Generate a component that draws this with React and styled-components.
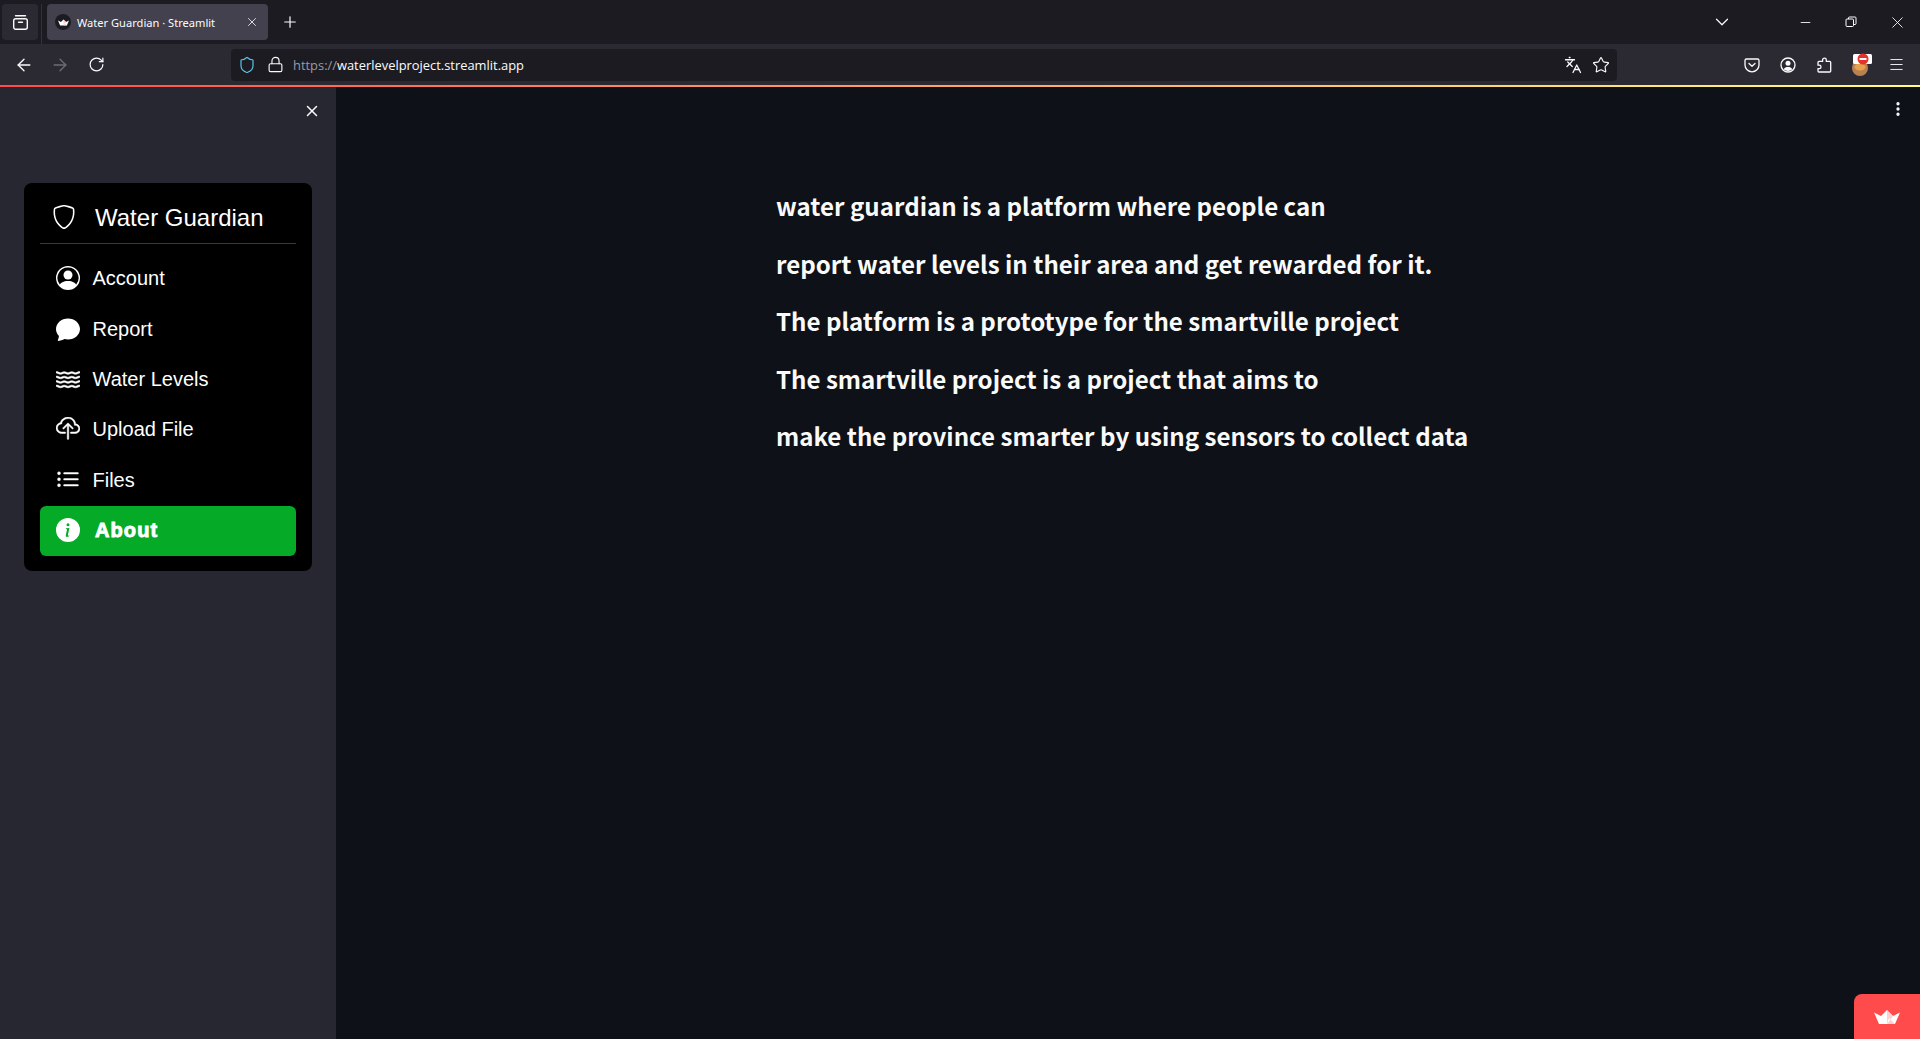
import React from "react";
import styled, { createGlobalStyle } from "styled-components";
import { BsShield, BsPersonCircle, BsChatFill, BsWater, BsCloudUpload, BsListUl, BsInfoCircleFill } from "react-icons/bs";
import { ArrowLeft, ArrowRight, RotateCw, Lock, Shield, Languages, Star, Plus, X, ChevronDown, Minus, Menu as MenuIcon, EllipsisVertical } from "lucide-react";

const Global = createGlobalStyle`
  html, body { margin: 0; padding: 0; height: 100%; background: #0e1117; overflow: hidden; }
  #root { height: 100%; }
`;

const Page = styled.div`
  width: 1920px; height: 1039px; display: flex; flex-direction: column; position: relative; overflow: hidden;
  font-family: "Liberation Sans", Arial, sans-serif;
`;

const TabStrip = styled.div`
  height: 44px; flex: none; background: #1c1b22; display: flex; align-items: flex-start; box-sizing: border-box; padding-top: 4px; color: #fbfbfe;
`;
const TabsButton = styled.div`
  width: 36px; height: 36px; margin-left: 2px; border-radius: 4px; background: #2b2a33; display: flex; align-items: center; justify-content: center;
`;
const StripDivider = styled.div`
  width: 1px; height: 40px; background: #33323a; margin: 0 4px 0 3px;
`;
const Tab = styled.div`
  width: 221px; height: 36px; margin-left: 1px; border-radius: 4px; background: #42414d; display: flex; align-items: center; box-sizing: border-box; padding-left: 8px; padding-right: 9px;
  font-family: "Noto Sans", "Open Sans", sans-serif; font-size: 11.1px; color: #fbfbfe;
`;
const Favicon = styled.div`
  width: 16px; height: 16px; border-radius: 50%; background: #1c1b22; display: flex; align-items: center; justify-content: center; margin-right: 6px; flex: none;
`;
const TabTitle = styled.span`
  flex: 1; white-space: nowrap;
`;
const Slot = styled.div`
  width: ${(p) => p.$w || 36}px; height: ${(p) => p.$h || 36}px; flex: none; display: flex; align-items: center; justify-content: center; color: ${(p) => p.$c || "#fbfbfe"};
`;
const Spacer = styled.div`
  flex: 1;
`;
const Toolbar = styled.div`
  height: 41px; flex: none; background: #2b2a33; display: flex; align-items: center; box-sizing: border-box; padding: 0 6px; color: #fbfbfe;
`;
const UrlBar = styled.div`
  width: 1386px; height: 32px; margin-left: 117px; background: #1c1b22; border-radius: 4px; display: flex; align-items: center; box-sizing: border-box; padding: 0 2px 0 2px;
`;
const UrlText = styled.div`
  font-family: "Open Sans", "Noto Sans", sans-serif; font-size: 12.9px; color: #fbfbfe; margin-left: 4px; white-space: nowrap;
`;
const UrlScheme = styled.span`
  color: #9a99a2;
`;
const Decoration = styled.div`
  height: 2px; flex: none; background: linear-gradient(90deg, rgb(255, 75, 75), rgb(255, 253, 128));
`;
const Body = styled.div`
  flex: 1; min-height: 0; display: flex;
`;
const Sidebar = styled.aside`
  width: 336px; flex: none; background: #262730; box-sizing: border-box; padding: 0 24px; display: flex; flex-direction: column; color: #fafafa;
`;
const SidebarTop = styled.div`
  height: 96px; flex: none; display: flex; justify-content: flex-end; align-items: flex-start; padding-top: 12px; box-sizing: border-box; margin-right: -12px;
`;
const Card = styled.nav`
  background: #000; border-radius: 8px; box-sizing: border-box; height: 388px; padding: 0 16px; display: flex; flex-direction: column;
`;
const MenuTitle = styled.div`
  height: 61px; flex: none; box-sizing: border-box; border-bottom: 1px solid #3a3a3a; display: flex; align-items: center; color: #fff; font-size: 24px; padding-left: 12px; padding-top: 9px;
  svg { margin-right: 19px; margin-top: -1px; }
`;
const MenuList = styled.div`
  display: flex; flex-direction: column; padding-top: 9.6px;
`;
const MenuItem = styled.div`
  height: 50.4px; display: flex; align-items: center; box-sizing: border-box; padding-left: 16px; border-radius: 6px; color: #fff; font-size: 20px;
  background: ${(p) => (p.$active ? "#05ab27" : "transparent")};
  font-weight: ${(p) => (p.$active ? 700 : 400)};
  ${(p) => p.$active && "letter-spacing: 1.1px; -webkit-text-stroke: 0.9px #fff;"}
  svg { flex: none; margin-right: ${(p) => (p.$active ? 15 : 12.5)}px; -webkit-text-stroke: 0; stroke-width: ${(p) => p.$sw || 0}; margin-top: -1px; }
`;
const Main = styled.main`
  flex: 1; min-width: 0; background: #0e1117; display: flex; justify-content: center; padding-top: 90px; box-sizing: border-box;
`;
const Content = styled.div`
  width: 736px; box-sizing: border-box; padding: 0 16px;
`;
const Line = styled.p`
  margin: 0; height: 57.6px; line-height: 58px; white-space: nowrap; font-family: "Noto Sans CJK SC", "Source Sans Pro", sans-serif; font-weight: 700; font-size: 24.1px; color: #fafafa;
`;
const KebabButton = styled.div`
  position: absolute; right: 12px; top: 99px; width: 20px; height: 20px; display: flex; align-items: center; justify-content: center; color: #fafafa;
`;
const Badge = styled.div`
  position: absolute; right: 0; bottom: 0; width: 66px; height: 45px; background: #ff4b4b; border-top-left-radius: 8px; display: flex; align-items: center; justify-content: center;
`;

const Crown = ({ w, h, back = "#fff" }) => (
  <svg width={w} height={h} viewBox="0 0 26 14">
    <path d="M0 2.5 L7 6 L13 0 L19 6 L26 2.5 L21 14 L5 14 Z" fill={back} />
    <path d="M13 0 L19 6 L13 14 Z M13 14 L21 14 L15 8 Z" fill="#f7c6c6" opacity="0.8" />
  </svg>
);

const Tabs = () => (
  <svg width="17" height="17" viewBox="0 0 17 17" fill="none" stroke="#fbfbfe" strokeWidth="1.4">
    <path d="M3.5 1.7h10" strokeLinecap="round" />
    <rect x="1.7" y="4.7" width="13.6" height="10.6" rx="2" />
    <path d="M6.5 8.3h4" strokeLinecap="round" />
  </svg>
);
const Restore = () => (
  <svg width="12" height="12" viewBox="0 0 12 12" fill="none" stroke="#fbfbfe" strokeWidth="1">
    <rect x="1" y="3" width="7.5" height="7.5" rx="1" />
    <path d="M3.5 3V2a1 1 0 0 1 1-1H10a1 1 0 0 1 1 1v5.5a1 1 0 0 1-1 1H8.5" />
  </svg>
);
const Pocket = () => (
  <svg width="16" height="16" viewBox="0 0 16 16" fill="none" stroke="#fbfbfe" strokeWidth="1.3" strokeLinecap="round" strokeLinejoin="round">
    <path d="M2.5 2h11A1.5 1.5 0 0 1 15 3.5V8a7 6.8 0 0 1-14 0V3.5A1.5 1.5 0 0 1 2.5 2Z" />
    <path d="M5 6.5 8 9.3l3-2.8" />
  </svg>
);
const AccountIcon = () => (
  <svg width="16" height="16" viewBox="0 0 16 16" fill="none">
    <circle cx="8" cy="8" r="7" stroke="#fbfbfe" strokeWidth="1.3" />
    <circle cx="8" cy="6.3" r="2.5" fill="#fbfbfe" />
    <path d="M3.6 12.2C4.6 10.4 6 9.9 8 9.9s3.4.5 4.4 2.3A6 6 0 0 1 8 14a6 6 0 0 1-4.4-1.8Z" fill="#fbfbfe" />
  </svg>
);
const Extension = () => (
  <svg width="16" height="16" viewBox="0 0 16 16" fill="none" stroke="#fbfbfe" strokeWidth="1.3" strokeLinejoin="round">
    <path d="M8.5 1.2c1.1 0 1.8.8 1.8 1.8v1.4h3.4c.6 0 1 .4 1 1V14c0 .5-.4 1-1 1H3c-.6 0-1-.5-1-1v-2.400h1.300c1 0 1.700-.8 1.700-1.700S4.300 8.200 3.300 8.200H2V5.400c0-.6.4-1 1-1h3.600V3c0-1 .8-1.800 1.900-1.800Z" />
  </svg>
);
const Avatar = () => (
  <svg width="24" height="24" viewBox="0 0 24 24">
    <circle cx="12" cy="15" r="8" fill="#b98052" />
    <ellipse cx="12" cy="14" rx="5.500" ry="3.500" fill="#e8a24e" />
    <rect x="5" y="1" width="19" height="10" rx="1.500" fill="#fff" />
    <circle cx="15" cy="6" r="5.500" fill="#e5322b" />
    <rect x="11.500" y="5" width="7" height="2" fill="#fff" />
  </svg>
);

const items = [
  { label: "Account", Icon: BsPersonCircle },
  { label: "Report", Icon: BsChatFill },
  { label: "Water Levels", Icon: BsWater, sw: 0.4 },
  { label: "Upload File", Icon: BsCloudUpload, sw: 0.3 },
  { label: "Files", Icon: BsListUl, sw: 0.3 },
  { label: "About", Icon: BsInfoCircleFill, active: true },
];
const lines = [
  "water guardian is a platform where people can",
  "report water levels in their area and get rewarded for it.",
  "The platform is a prototype for the smartville project",
  "The smartville project is a project that aims to",
  "make the province smarter by using sensors to collect data",
];

export default function App() {
  return (
    <Page>
      <Global />
      <TabStrip>
        <TabsButton><Tabs /></TabsButton>
        <StripDivider />
        <Tab>
          <Favicon><Crown w={11} h={7} /></Favicon>
          <TabTitle>Water Guardian · Streamlit</TabTitle>
          <X size={14} strokeWidth={1.4} />
        </Tab>
        <Slot $w={43}><Plus size={18} strokeWidth={1.6} /></Slot>
        <Spacer />
        <Slot><ChevronDown size={22} strokeWidth={1.3} /></Slot>
        <Slot $w={42} />
        <Slot $w={46}><Minus size={15} strokeWidth={1.4} /></Slot>
        <Slot $w={46}><Restore /></Slot>
        <Slot $w={46}><X size={19} strokeWidth={1.1} /></Slot>
      </TabStrip>
      <Toolbar>
        <Slot><ArrowLeft size={20} strokeWidth={1.6} /></Slot>
        <Slot $c="#6d6c75"><ArrowRight size={20} strokeWidth={1.6} /></Slot>
        <Slot><RotateCw size={17} strokeWidth={1.7} /></Slot>
        <UrlBar>
          <Slot $w={28} $h={32} $c="#5cc2e8"><Shield size={18} strokeWidth={1.6} /></Slot>
          <Slot $w={28} $h={32}><Lock size={17} strokeWidth={1.6} /></Slot>
          <UrlText><UrlScheme>https://</UrlScheme>waterlevelproject.streamlit.app</UrlText>
          <Spacer />
          <Slot $w={28} $h={32}><Languages size={18} strokeWidth={1.7} /></Slot>
          <Slot $w={28} $h={32}><Star size={18} strokeWidth={1.5} /></Slot>
        </UrlBar>
        <Spacer />
        <Slot><Pocket /></Slot>
        <Slot><AccountIcon /></Slot>
        <Slot><Extension /></Slot>
        <Slot><Avatar /></Slot>
        <Slot><MenuIcon size={17} strokeWidth={1.3} /></Slot>
      </Toolbar>
      <Decoration />
      <Body>
        <Sidebar>
          <SidebarTop><Slot $w={24} $h={24} $c="#fafafa"><X size={18} strokeWidth={2} /></Slot></SidebarTop>
          <Card>
            <MenuTitle><BsShield size={24} />Water Guardian</MenuTitle>
            <MenuList>
              {items.map(({ label, Icon, active, sw }) => (
                <MenuItem key={label} $active={active} $sw={sw}>
                  <Icon size={24} />
                  {label}
                </MenuItem>
              ))}
            </MenuList>
          </Card>
        </Sidebar>
        <Main>
          <Content>
            {lines.map((t) => <Line key={t}>{t}</Line>)}
          </Content>
        </Main>
      </Body>
      <KebabButton><EllipsisVertical size={18} strokeWidth={2.4} /></KebabButton>
      <Badge><Crown w={26} h={14} /></Badge>
    </Page>
  );
}
